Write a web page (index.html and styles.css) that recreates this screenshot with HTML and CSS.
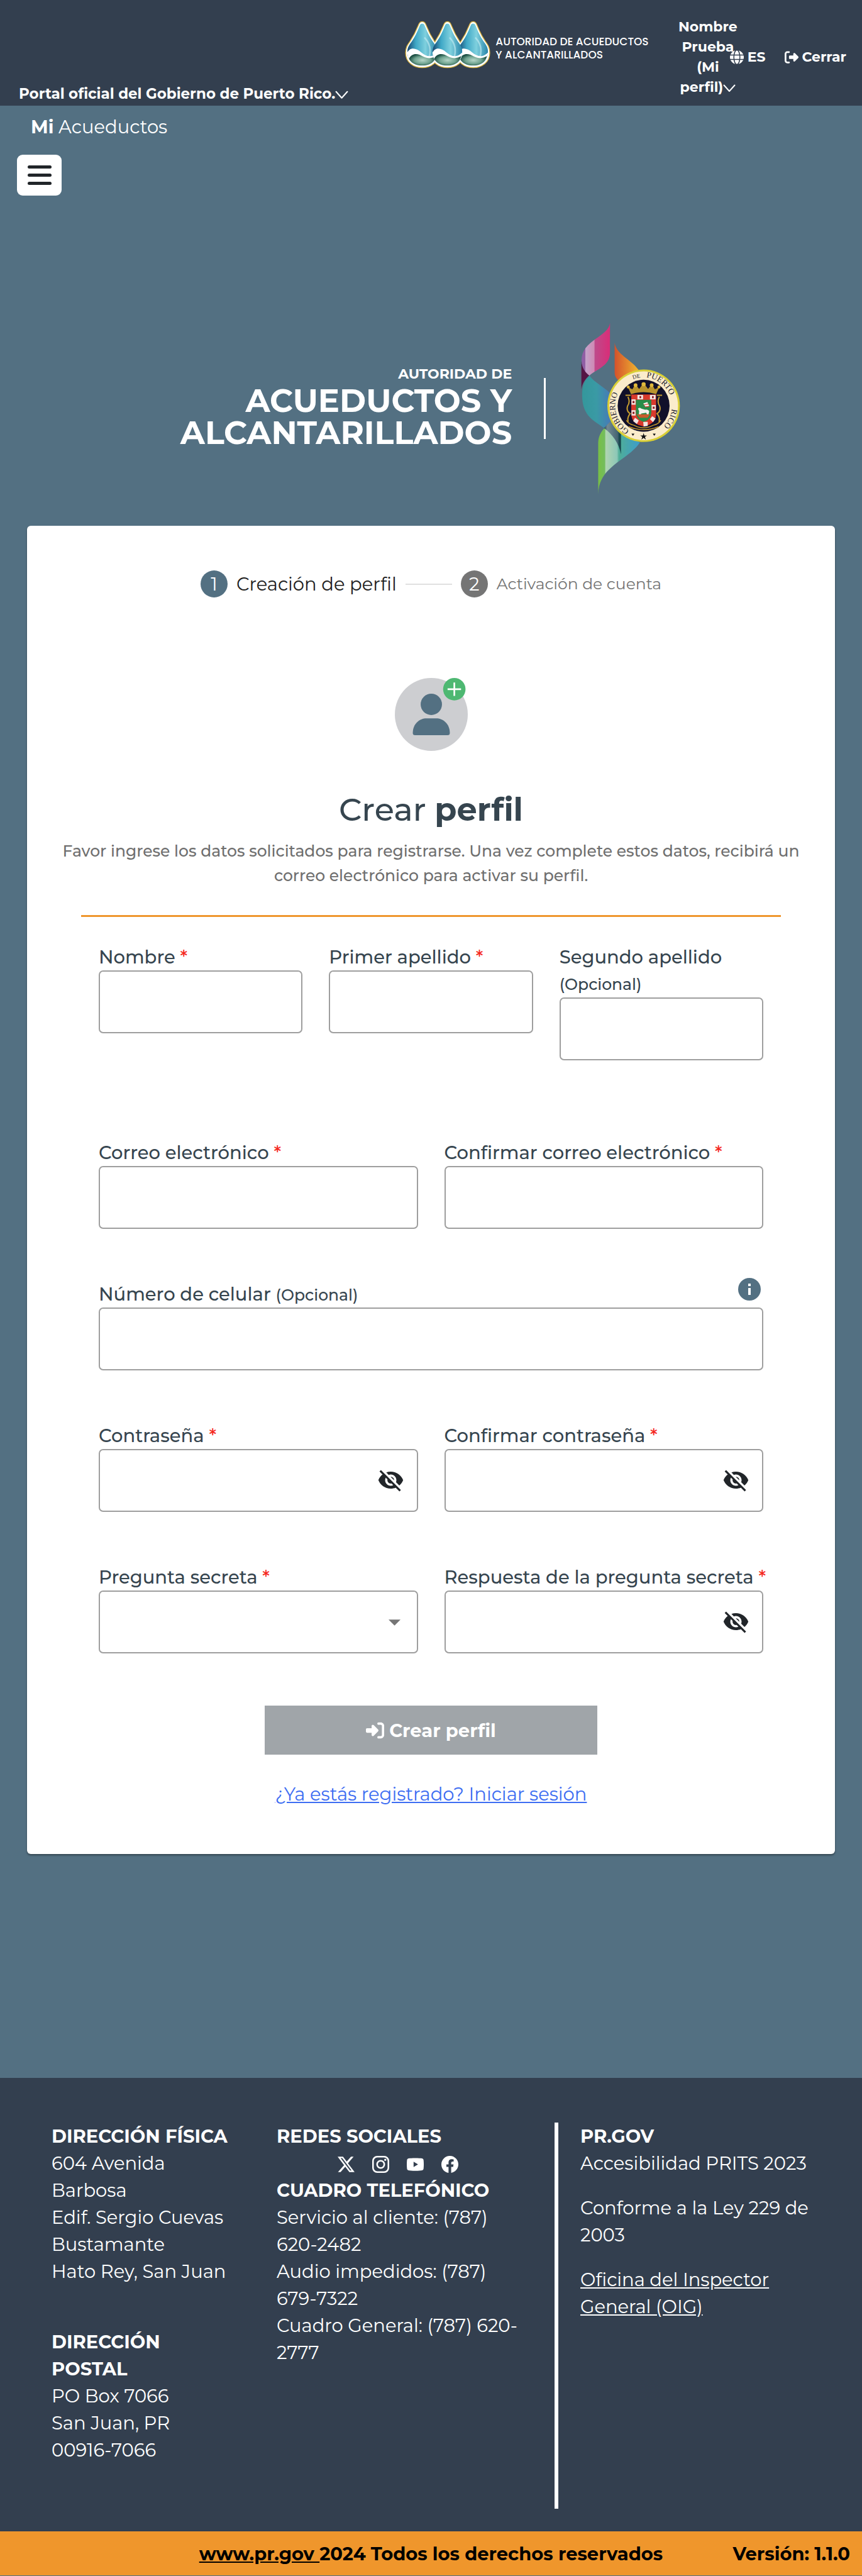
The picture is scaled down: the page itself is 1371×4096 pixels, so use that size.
FILE: index.html
```html
<!DOCTYPE html>
<html lang="es">
<head>
<meta charset="utf-8">
<meta name="viewport" content="width=device-width, initial-scale=1">
<title>Mi Acueductos - Crear perfil</title>
<link rel="stylesheet" href="styles.css">
</head>
<body>
<svg class="defs" aria-hidden="true">
  <symbol id="chevron" viewBox="0 0 20 20"><path d="M1.500 5.500 L10 15 L18.500 5.500" fill="none" stroke="currentColor" stroke-width="2" stroke-linecap="round" stroke-linejoin="round"/></symbol>
  <symbol id="eye-off" viewBox="0 0 24 24"><path fill="currentColor" d="M12 7c2.760 0 5 2.240 5 5 0 .65-.13 1.260-.36 1.830l2.920 2.920c1.510-1.260 2.700-2.890 3.430-4.750-1.730-4.390-6-7.500-11-7.500-1.400 0-2.740.25-3.980.7l2.160 2.160C10.740 7.130 11.350 7 12 7zM2 4.270l2.280 2.280.46.46C3.080 8.300 1.780 10.020 1 12c1.730 4.390 6 7.500 11 7.500 1.550 0 3.030-.3 4.380-.84l.42.42L19.730 22 21 20.730 3.270 3 2 4.270zM7.530 9.800l1.550 1.550c-.05.21-.08.43-.08.65 0 1.660 1.340 3 3 3 .22 0 .44-.03.65-.08l1.550 1.550c-.67.33-1.410.53-2.200.53-2.760 0-5-2.240-5-5 0-.79.2-1.530.53-2.200zm4.310-.78l3.150 3.150.02-.16c0-1.660-1.340-3-3-3l-.17.01z"/></symbol>
</svg>

<header class="topbar">
  <button class="topbar-portal" type="button">Portal oficial del Gobierno de Puerto Rico.<svg class="chevron"><use href="#chevron"/></svg></button>
  <a class="brand" href="#">
    <svg class="brand-drops" viewBox="723 37 154 85" aria-hidden="true">
      <defs>
        <linearGradient id="water" x1="0" x2="1" y1="0" y2="0"><stop offset="0" stop-color="#123a66"/><stop offset=".3" stop-color="#3fa8c6"/><stop offset=".6" stop-color="#7fd0de"/><stop offset="1" stop-color="#1f7ea4"/></linearGradient>
        <radialGradient id="ground"><stop offset="0" stop-color="#b5d6c8"/><stop offset=".6" stop-color="#6fa38f"/><stop offset="1" stop-color="#1d5044"/></radialGradient>
        <path id="drop" d="M0 2 C3 2 4 4 6 9 C10 19 14 27 20 36 C25 43 28 47 28 56 C28 72 15 81 0 81 C-15 81 -28 72 -28 56 C-28 47 -25 43 -20 36 C-14 27 -10 19 -6 9 C-4 4 -3 2 0 2 Z"/>
        <clipPath id="drop-clip"><use href="#drop"/></clipPath>
        <g id="drop-fill" clip-path="url(#drop-clip)">
          <rect x="-30" width="60" height="84" fill="url(#water)"/>
          <path d="M4 28 C14 38 18 50 12 68" fill="none" stroke="#c6edf3" stroke-opacity=".6" stroke-width="3"/>
          <path d="M-30 62 C-26 46 -14 46 -2 56 C8 64 18 68 30 54 V84 H-30 Z" fill="#fff"/>
          <path d="M-25 68 C-19 56 -8 58 2 64 C10 68 18 68 26 63 C22 78 10 84 0 82 C-14 82 -22 76 -25 68 Z" fill="url(#ground)"/>
        </g>
      </defs>
      <g fill="#fff" stroke="#d7b240" stroke-width="5">
        <use href="#drop" x="754" y="38"/><use href="#drop" x="799" y="38"/><use href="#drop" x="845" y="38"/>
      </g>
      <g fill="#fff" stroke="#fff" stroke-width="2">
        <use href="#drop" x="754" y="38"/><use href="#drop" x="799" y="38"/><use href="#drop" x="845" y="38"/>
      </g>
      <g transform="translate(845 40) scale(.95)"><use href="#drop-fill"/></g>
      <g transform="translate(754 40) scale(.95)"><use href="#drop-fill"/></g>
      <g transform="translate(799 40) scale(.95)"><use href="#drop-fill"/></g>
    </svg>
    <span class="brand-name">AUTORIDAD DE ACUEDUCTOS<br>Y ALCANTARILLADOS</span>
  </a>
  <nav class="topbar-nav">
    <button class="topbar-user" type="button">Nombre<br>Prueba<br>(Mi<br>perfil)<svg class="chevron chevron-small"><use href="#chevron"/></svg></button>
    <a class="topbar-link" href="#">
      <svg class="icon" viewBox="0 0 22 22" aria-hidden="true"><circle cx="11" cy="11" r="11" fill="#fff"/><g fill="none" stroke="#333f4f" stroke-width="1.500"><ellipse cx="11" cy="11" rx="4.800" ry="11.500"/><path d="M0 7.500H22M0 14.500H22"/></g></svg>
      ES</a>
    <a class="topbar-link topbar-exit" href="#">
      <svg class="icon" viewBox="0 0 512 512" aria-hidden="true"><path fill="currentColor" d="M377.900 105.900L500.700 228.700c7.200 7.200 11.300 17.100 11.300 27.300s-4.100 20.100-11.300 27.300L377.900 406.100c-6.400 6.400-15 9.900-24 9.900c-18.700 0-33.900-15.200-33.900-33.900l0-62.100-128 0c-17.700 0-32-14.300-32-32l0-64c0-17.700 14.300-32 32-32l128 0 0-62.100c0-18.700 15.200-33.900 33.900-33.900c9 0 17.600 3.600 24 9.900zM160 96L96 96c-17.700 0-32 14.300-32 32l0 256c0 17.700 14.300 32 32 32l64 0c17.700 0 32 14.300 32 32s-14.300 32-32 32l-64 0c-53 0-96-43-96-96L0 128C0 75 43 32 96 32l64 0c17.700 0 32 14.300 32 32s-14.300 32-32 32z"/></svg>
      Cerrar</a>
  </nav>
</header>

<div class="subbar">
  <a class="app-name" href="#"><strong>Mi</strong> Acueductos</a>
  <button class="menu-button" type="button" aria-label="Menú"><span></span><span></span><span></span></button>
</div>

<main>
  <section class="hero">
    <div class="hero-name"><small>AUTORIDAD DE</small>ACUEDUCTOS Y<br>ALCANTARILLADOS</div>
    <div class="hero-divider"></div>
    <svg class="hero-emblem" viewBox="100 40 545 925" role="img" aria-label="Gobierno de Puerto Rico">
      <defs>
        <linearGradient id="pink"><stop offset="0" stop-color="#8a5ea6"/><stop offset=".13" stop-color="#9460a4"/><stop offset=".14" stop-color="#c5a2cb"/><stop offset=".45" stop-color="#cf8ab4"/><stop offset=".46" stop-color="#bd4b8b"/><stop offset="1" stop-color="#d92d78"/></linearGradient>
        <linearGradient id="orange"><stop offset="0" stop-color="#d4522c"/><stop offset="1" stop-color="#f0b52e"/></linearGradient>
        <linearGradient id="teal"><stop offset="0" stop-color="#34979b"/><stop offset=".5" stop-color="#3a9aa5"/><stop offset="1" stop-color="#4779b8"/></linearGradient>
        <linearGradient id="green"><stop offset="0" stop-color="#78bf45"/><stop offset=".16" stop-color="#74bd5e"/><stop offset=".18" stop-color="#b0d4b1"/><stop offset=".45" stop-color="#8dc7b7"/><stop offset=".5" stop-color="#4fae98"/><stop offset="1" stop-color="#3d9ccb"/></linearGradient>
        <linearGradient id="shade"><stop offset="0" stop-color="#28485a"/><stop offset=".2" stop-color="#748a94"/><stop offset=".8" stop-color="#456572"/><stop offset=".9" stop-color="#17474e"/></linearGradient>
        <path id="ring" d="M442 640 A152 152 0 0 1 442 336 A152 152 0 0 1 442 640"/>
      </defs>
      <path fill="#551544" d="M109 250 L109 400 C114 365 130 345 152 325 C128 305 114 285 109 250Z"/>
      <path fill="url(#pink)" d="M262 45 C255 120 110 135 110 245 C112 290 130 308 152 327 C190 292 262 275 262 205Z"/>
      <path fill="url(#orange)" d="M287 150 C296 215 370 235 415 296 L305 350 C290 335 287 325 287 305Z"/>
      <path fill="url(#teal)" d="M152 327 C180 365 220 380 262 420 L268 570 L230 607 C185 570 113 550 113 430 C113 385 125 350 152 327Z"/>
      <path fill="url(#green)" d="M230 610 C250 590 300 600 330 640 L422 684 C360 780 200 810 199 962 L199 690 C199 655 212 630 230 610Z"/>
      <path fill="url(#shade)" d="M230 608 L268 568 L321 640 L321 747 C310 690 275 640 230 608Z"/>
      <circle cx="442" cy="488" r="194" fill="#d9cf35"/>
      <circle cx="442" cy="488" r="184" fill="#fbeccb"/>
      <circle cx="442" cy="488" r="139" fill="#11102a"/>
      <g class="emblem-text">
        <text><textPath href="#ring" startOffset="80">GOBIERNO</textPath></text>
        <text class="emblem-small"><textPath href="#ring" startOffset="420">DE</textPath></text>
        <text><textPath href="#ring" startOffset="492">PUERTO</textPath></text>
        <text><textPath href="#ring" startOffset="732">RICO</textPath></text>
      </g>
      <path fill="#111" d="M442 634 l4 13h14l-11 8 5 14-12-9-12 9 5-14-11-8h14zM377 637h16l-8 12zM491 637h16l-8 12z"/>
      <g fill="none" stroke="#c39a2f" stroke-width="7">
        <path d="M345 432h28M513 432h28M358 440q14 26-2 50q-8 26 14 40q-18 24-10 44M526 440q-14 26 2 50q8 26-14 40q18 24 10 44"/>
        <path d="M350 566q12 20 40 26q50 28 104 0q28-6 40-26M362 600q80 32 160 0" stroke-width="5"/>
      </g>
      <path fill="#b9942e" d="M375 426 L358 388 L382 400 L398 372 L418 398 L442 366 L466 398 L486 372 L502 400 L526 388 L509 426 Q442 404 375 426Z"/>
      <g fill="#e0b93c"><circle cx="360" cy="388" r="8"/><circle cx="399" cy="378" r="10"/><circle cx="442" cy="373" r="11"/><circle cx="485" cy="378" r="10"/><circle cx="524" cy="388" r="8"/></g>
      <path fill="#d8392c" d="M376 428 H509 V530 Q509 585 442 599 Q376 585 376 530Z"/>
      <g fill="#f3e6e2"><path d="M409 430h30v24h-30zM476 430h30v24h-30zM377 454h22v28h-22zM485 484h22v28h-22zM377 512h22v28h-22zM396 552l20 14-10 20-20-16zM440 574h24v22l-22 3zM488 544l18 12-14 20-16-16z"/></g>
      <g fill="#922024"><path d="M420 436h9v12h-9zM487 436h9v12h-9zM383 462h10v12h-10zM491 492h10v12h-10zM383 520h10v12h-10z"/></g>
      <path fill="#278c49" d="M401 456 H483 V525 Q480 565 442 574 Q404 562 401 525Z"/>
      <path fill="#f5f2ee" d="M412 503 q8-8 18 0 l20 6 q16-4 22 8 l-4 18 h-8 l-4-10 -26 4 -6 10 h-8 l2-22z M440 476 l22-8 10 20 -20 6z"/>
      <path d="M442 484 L470 478M448 494L472 492" stroke="#d8392c" stroke-width="4"/>
      <path fill="#c75a2b" d="M406 534h70l-12 18h-44z"/>
    </svg>
  </section>

  <section class="card">
    <ol class="stepper">
      <li class="step step-active"><span class="step-number">1</span>Creación de perfil</li>
      <li class="step-line" aria-hidden="true"></li>
      <li class="step"><span class="step-number">2</span>Activación de cuenta</li>
    </ol>

    <svg class="avatar" viewBox="0 0 130 130" aria-hidden="true">
      <circle cx="65" cy="65" r="65" fill="#cdced1"/>
      <circle cx="65" cy="47" r="19" fill="#537082"/>
      <path d="M32 98 C32 81 45 72 56 72 H74 C85 72 98 81 98 98 Q98 102 94 102 H36 Q32 102 32 98Z" fill="#537082"/>
      <circle cx="106" cy="20" r="20" fill="#4eb872"/>
      <path d="M106 8V32M94 20H118" stroke="#fff" stroke-width="3"/>
    </svg>

    <h1 class="title">Crear <strong>perfil</strong></h1>
    <p class="intro">Favor ingrese los datos solicitados para registrarse. Una vez complete estos datos, recibirá un correo electrónico para activar su perfil.</p>
    <hr class="rule">

    <form class="form">
      <div class="row row-names">
        <div class="field"><label for="nombre">Nombre <span class="required">*</span></label><input id="nombre" type="text"></div>
        <div class="field"><label for="apellido1">Primer apellido <span class="required">*</span></label><input id="apellido1" type="text"></div>
        <div class="field"><label for="apellido2">Segundo apellido <small>(Opcional)</small></label><input id="apellido2" type="text"></div>
      </div>
      <div class="row">
        <div class="field"><label for="correo">Correo electrónico <span class="required">*</span></label><input id="correo" type="email"></div>
        <div class="field"><label for="correo2">Confirmar correo electrónico <span class="required">*</span></label><input id="correo2" type="email"></div>
      </div>
      <div class="row">
        <div class="field">
          <div class="label-bar">
            <label for="celular">Número de celular <small>(Opcional)</small></label>
            <button class="info" type="button" aria-label="Información"><svg viewBox="0 0 36 36"><circle cx="18" cy="18" r="18" fill="#537082"/><path d="M16 9h4v4h-4zM16 16h4v11h-4z" fill="#fff"/></svg></button>
          </div>
          <input id="celular" type="tel">
        </div>
      </div>
      <div class="row">
        <div class="field"><label for="clave">Contraseña <span class="required">*</span></label><div class="control"><input id="clave" type="password"><button class="eye" type="button" aria-label="Mostrar"><svg><use href="#eye-off"/></svg></button></div></div>
        <div class="field"><label for="clave2">Confirmar contraseña <span class="required">*</span></label><div class="control"><input id="clave2" type="password"><button class="eye" type="button" aria-label="Mostrar"><svg><use href="#eye-off"/></svg></button></div></div>
      </div>
      <div class="row">
        <div class="field"><label for="pregunta">Pregunta secreta <span class="required">*</span></label><div class="control"><select id="pregunta"><option></option></select><svg class="arrow" viewBox="0 0 20 10" aria-hidden="true"><path d="M0 0H20L10 10Z" fill="#757575"/></svg></div></div>
        <div class="field"><label for="respuesta">Respuesta de la pregunta secreta <span class="required">*</span></label><div class="control"><input id="respuesta" type="password"><button class="eye" type="button" aria-label="Mostrar"><svg><use href="#eye-off"/></svg></button></div></div>
      </div>
      <button class="submit" type="submit" disabled><svg class="submit-icon" viewBox="0 0 512 512" aria-hidden="true"><path fill="currentColor" d="M217.900 105.900L340.700 228.700c7.200 7.200 11.300 17.100 11.300 27.300s-4.100 20.100-11.300 27.300L217.900 406.100c-6.400 6.400-15 9.900-24 9.900c-18.700 0-33.900-15.200-33.900-33.900l0-62.100L32 320c-17.700 0-32-14.300-32-32l0-64c0-17.700 14.300-32 32-32l128 0 0-62.100c0-18.700 15.200-33.900 33.900-33.900c9 0 17.600 3.600 24 9.900zM352 416l64 0c17.700 0 32-14.300 32-32l0-256c0-17.700-14.300-32-32-32l-64 0c-17.700 0-32-14.300-32-32s14.300-32 32-32l64 0c53 0 96 43 96 96l0 256c0 53-43 96-96 96l-64 0c-17.700 0-32-14.300-32-32s14.300-32 32-32z"/></svg>Crear perfil</button>
      <a class="login-link" href="#">¿Ya estás registrado? Iniciar sesión</a>
    </form>
  </section>
</main>

<footer class="footer">
  <div class="footer-grid">
    <div class="footer-col">
      <h2>DIRECCIÓN FÍSICA</h2>
      <address>604 Avenida<br>Barbosa<br>Edif. Sergio Cuevas<br>Bustamante<br>Hato Rey, San Juan</address>
      <h2 class="postal">DIRECCIÓN<br>POSTAL</h2>
      <address>PO Box 7066<br>San Juan, PR<br>00916-7066</address>
    </div>
    <div class="footer-col">
      <h2>REDES SOCIALES</h2>
      <div class="social">
        <a href="#" aria-label="X"><svg viewBox="0 0 16 16"><path d="M12.600.75h2.454l-5.360 6.142L16 15.250h-4.937l-3.867-5.070-4.425 5.070H.316l5.733-6.570L0 .75h5.063l3.495 4.633L12.601.75Zm-.86 13.028h1.360L4.323 2.145H2.865z"/></svg></a>
        <a href="#" aria-label="Instagram"><svg viewBox="0 0 16 16"><rect x=".75" y=".75" width="14.500" height="14.500" rx="4" fill="none" stroke="#fff" stroke-width="1.500"/><circle cx="8" cy="8" r="3.400" fill="none" stroke="#fff" stroke-width="1.500"/><circle cx="12.300" cy="3.700" r="1"/></svg></a>
        <a href="#" aria-label="YouTube"><svg viewBox="0 0 16 16"><path fill-rule="evenodd" d="M8 2c3 0 5 .1 6.400.4C15.300 2.600 15.700 3.200 15.800 4 16.070 6.500 16.070 9.500 15.800 12c-.1.800-.5 1.400-1.400 1.600C13 13.900 11 14 8 14s-5-.1-6.400-.4C.7 13.400.3 12.800.2 12-.07 9.500-.07 6.500.2 4c.1-.8.500-1.400 1.400-1.600C3 2.100 5 2 8 2zM6.400 5.500v5L10.600 8z"/></svg></a>
        <a href="#" aria-label="Facebook"><svg viewBox="0 0 16 16"><path d="M16 8.049c0-4.446-3.582-8.050-8-8.050C3.580 0-.002 3.603-.002 8.050c0 4.017 2.926 7.347 6.750 7.951v-5.625h-2.030V8.050H6.750V6.275c0-2.017 1.195-3.131 3.022-3.131.876 0 1.791.157 1.791.157v1.980h-1.009c-.993 0-1.303.621-1.303 1.258v1.510h2.218l-.354 2.326H9.250V16c3.824-.604 6.750-3.934 6.750-7.951"/></svg></a>
      </div>
      <h2>CUADRO TELEFÓNICO</h2>
      <p>Servicio al cliente: (787)<br>620-2482<br>Audio impedidos: (787)<br>679-7322<br>Cuadro General: (787) 620-<br>2777</p>
    </div>
    <div class="footer-col footer-gov">
      <h2>PR.GOV</h2>
      <p>Accesibilidad PRITS 2023</p>
      <p>Conforme a la Ley 229 de<br>2003</p>
      <p><a href="#">Oficina del Inspector<br>General (OIG)</a></p>
    </div>
  </div>
  <div class="legal">
    <span></span>
    <span><a href="#">www.pr.gov </a>2024 Todos los derechos reservados</span>
    <span class="version">Versión: 1.1.0</span>
  </div>
</footer>
</body>
</html>
```
FILE: styles.css
```css
* { box-sizing: border-box; }

body {
  margin: 0;
  background: #537082;
  color: #fff;
  font-family: Montserrat, Inter, "Liberation Sans", sans-serif;
  font-size: 29px;
  line-height: 43px;
}

button { font: inherit; color: inherit; background: none; border: 0; padding: 0; }
a { color: inherit; }
h1, h2, p, ol { margin: 0; padding: 0; }
.defs { display: none; }

/* top bar */
.topbar {
  display: grid;
  grid-template-columns: 47% auto 1fr;
  min-height: 168px;
  background: #333f4f;
  font-size: 22px;
  font-weight: 700;
  line-height: 32px;
}
.topbar-portal { align-self: end; justify-self: start; padding: 0 0 3px 30px; font-size: 23px; white-space: nowrap; }
.chevron { width: 21px; height: 21px; vertical-align: -4px; }
.chevron-small { width: 20px; height: 20px; }
.brand {
  display: flex;
  align-items: flex-start;
  gap: 7px;
  padding-top: 33px;
  text-decoration: none;
}
.brand-drops { width: 137px; height: 76px; }
.brand-name { padding-top: 23px; font-family: Poppins, Lato, sans-serif; font-size: 17px; font-weight: 500; line-height: 21px; white-space: nowrap; }
.topbar-nav { display: flex; justify-content: flex-end; align-items: center; padding: 27px 25px 13px 0; }
.topbar-user { margin-right: -12px; text-align: center; }
.topbar-link { display: flex; align-items: center; gap: 6px; text-decoration: none; }
.topbar-exit { margin-left: 30px; }
.icon { width: 22px; height: 22px; }

/* application bar */
.subbar { padding: 13px 27px 0; }
.app-name { display: block; padding-left: 22px; line-height: 42px; text-decoration: none; }
.menu-button {
  display: flex;
  flex-direction: column;
  align-items: center;
  justify-content: center;
  gap: 8px;
  width: 71px;
  height: 65px;
  margin-top: 23px;
  border-radius: 9px;
  background: #fff;
}
.menu-button span { width: 38px; height: 5px; border-radius: 3px; background: #212529; }

/* agency logo */
.hero { display: flex; align-items: center; justify-content: center; padding: 201px 0 49px; }
.hero-name { padding-bottom: 7px; font-size: 51px; font-weight: 700; line-height: 51px; text-align: right; }
.hero-name small { display: block; font-size: 22px; line-height: 34px; }
.hero-divider { width: 3px; height: 97px; margin: 0 54px 0 51px; background: #fff; }
.hero-emblem { width: 162px; height: 275px; }
.emblem-text { font-family: "Liberation Serif", serif; font-size: 44px; fill: #1b1c2e; }
.emblem-small { font-size: 30px; }

/* card */
.card {
  margin: 0 43px;
  padding: 71px 43px 73px;
  border-radius: 6px;
  background: #fff;
  box-shadow: 0 2px 3px rgba(0, 0, 0, .4);
  color: #36454f;
}
.stepper { display: flex; align-items: center; justify-content: center; list-style: none; color: #757575; }
.step { display: flex; align-items: center; gap: 14px; font-size: 25px; }
.step-active { font-size: 29px; color: #212121; }
.step-number {
  width: 43px;
  height: 43px;
  border-radius: 50%;
  background: #757575;
  color: #fff;
  font-size: 29px;
  text-align: center;
}
.step-active .step-number { background: #537082; }
.step-line { width: 74px; height: 2px; margin: 0 14px; background: #e0e0e0; }
.avatar { display: block; width: 116px; height: 116px; margin: 128px auto 61px; }
.title { font-size: 51px; font-weight: 500; line-height: 64px; text-align: center; }
.intro { padding-top: 15px; color: #6f6f6f; font-size: 25px; font-weight: 500; line-height: 39px; text-align: center; }
.rule { height: 3px; margin: 43px 43px; border: 0; background: #ef962c; }

/* form */
.form { display: flex; flex-direction: column; gap: 83px; margin: 0 71px; }
.row { display: grid; grid-auto-flow: column; grid-auto-columns: minmax(0, 1fr); gap: 42px; align-items: start; }
.row-names { padding-bottom: 43px; }
.field { display: flex; flex-direction: column; }
.field label { font-weight: 500; line-height: 42px; white-space: nowrap; }
.row-names label { white-space: normal; }
.field small { font-size: 25px; line-height: 1; }
.row-names small { line-height: 42px; }
.required { color: #f5261c; }
.label-bar { display: flex; justify-content: space-between; }
.info { width: 36px; height: 36px; margin: -5px 4px 0 0; }
.info svg, .eye svg { display: block; width: 100%; height: 100%; }
.field input, .field select {
  display: block;
  width: 100%;
  height: 100px;
  padding: 0 16px;
  border: 2px solid #9e9e9e;
  border-radius: 7px;
  background: #fff;
  font: inherit;
  appearance: none;
}
.control { position: relative; }
.eye { position: absolute; top: 28px; right: 22px; width: 43px; height: 43px; color: #212529; }
.arrow { position: absolute; top: 46px; right: 28px; width: 19px; height: 10px; pointer-events: none; }
.submit {
  display: flex;
  align-items: center;
  justify-content: center;
  gap: 8px;
  align-self: center;
  width: 50%;
  height: 78px;
  background: #a0a5a9;
  color: #fff;
  font-weight: 700;
}
.submit-icon { width: 29px; height: 29px; }
.login-link { align-self: center; margin-top: -42px; color: #3d6df2; line-height: 44px; }

/* footer */
.footer { margin-top: 356px; background: #333f4f; }
.footer-grid { display: grid; grid-template-columns: 440fr 442fr 489fr; padding: 71px 0 36px; }
.footer-col { min-width: 0; }
.footer-col h2 { font-size: 29px; font-weight: 700; line-height: 43px; }
.footer-col address { font-style: normal; }
.footer-col:first-child { padding: 0 0 72px 82px; }
.footer-col .postal { padding-top: 69px; }
.social { display: flex; justify-content: center; gap: 28px; height: 43px; padding: 10px 56px 0 0; }
.social a, .social svg { display: block; width: 27px; height: 27px; fill: #fff; }
.footer-gov { border-left: 6px solid #fff; padding-left: 35px; }
.footer-gov p { padding-bottom: 28px; }
.legal {
  display: grid;
  grid-template-columns: 1fr auto 1fr;
  align-items: center;
  min-height: 70px;
  padding: 0 19px;
  background: #ef962c;
  color: #000;
  font-weight: 700;
}
.version { text-align: right; }
```
